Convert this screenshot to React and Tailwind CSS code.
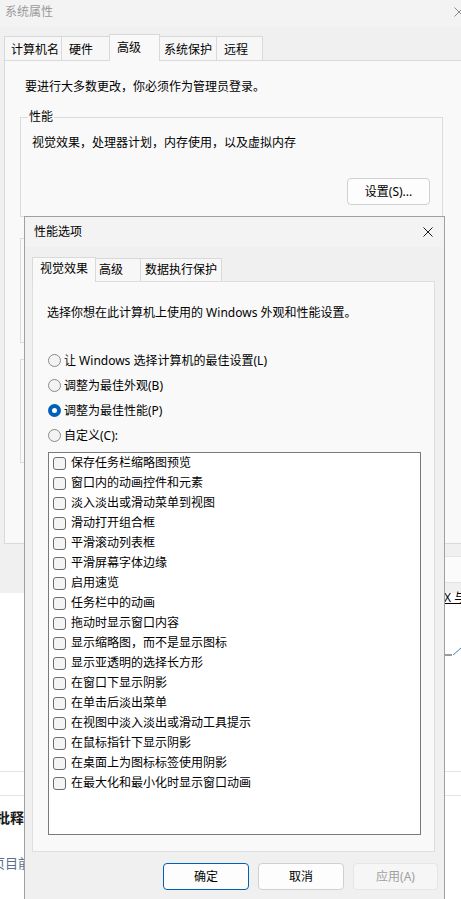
import React from "react";

const bgTabs = [
  { label: "计算机名", cls: "w-[58px] pl-[6px]" },
  { label: "硬件", cls: "w-[49px] pl-[7px] -ml-px" },
  { label: "高级", cls: "w-[51px] pl-[7px] -ml-px", active: true },
  { label: "系统保护", cls: "w-[58px] pl-[4px] -ml-px" },
  { label: "远程", cls: "w-[47px] pl-[7px] -ml-px" },
];

const perfTabs = [
  { label: "视觉效果", cls: "w-[64px] pl-[7px]", active: true },
  { label: "高级", cls: "w-[46px] pl-[3px] -ml-px" },
  { label: "数据执行保护", cls: "w-[82px] pl-[4px] -ml-px" },
];

const radios = [
  { label: "让 Windows 选择计算机的最佳设置(L)" },
  { label: "调整为最佳外观(B)" },
  { label: "调整为最佳性能(P)", checked: true },
  { label: "自定义(C):" },
];

const effects = [
  "保存任务栏缩略图预览",
  "窗口内的动画控件和元素",
  "淡入淡出或滑动菜单到视图",
  "滑动打开组合框",
  "平滑滚动列表框",
  "平滑屏幕字体边缘",
  "启用速览",
  "任务栏中的动画",
  "拖动时显示窗口内容",
  "显示缩略图，而不是显示图标",
  "显示亚透明的选择长方形",
  "在窗口下显示阴影",
  "在单击后淡出菜单",
  "在视图中淡入淡出或滑动工具提示",
  "在鼠标指针下显示阴影",
  "在桌面上为图标标签使用阴影",
  "在最大化和最小化时显示窗口动画",
];

function CloseIcon({ className }) {
  return (
    <svg width="10" height="10" viewBox="0 0 10 10" className={className}>
      <path d="M0.5 0.5L9.5 9.5M9.5 0.5L0.5 9.5" stroke="currentColor" strokeWidth="1" fill="none" />
    </svg>
  );
}

function Tab({ label, cls, active, tall }) {
  if (active) {
    return (
      <div
        className={`relative z-10 -mb-px shrink-0 border border-b-0 border-[#d9d9d9] bg-[#f9f9f9] ${tall} ${cls}`}
      >
        {label}
      </div>
    );
  }
  return (
    <div className={`shrink-0 border border-b-0 border-[#d9d9d9] bg-[#f7f7f7] ${cls}`}>
      {label}
    </div>
  );
}

function GroupBox({ title, className, children }) {
  return (
    <div className={`relative ml-[15px] w-[423px] border border-[#dcdcdc] ${className}`}>
      <span className="absolute left-[7px] top-[-9px] bg-[#f9f9f9] px-[1px] leading-[16px]">
        {title}
      </span>
      {children}
    </div>
  );
}

function Radio({ checked }) {
  if (checked) {
    return (
      <span className="flex h-[13px] w-[13px] shrink-0 items-center justify-center rounded-full bg-[#005fb8]">
        <span className="h-[5px] w-[5px] rounded-full bg-white" />
      </span>
    );
  }
  return <span className="h-[13px] w-[13px] shrink-0 rounded-full border border-[#8a8a8a] bg-[#f3f3f3]" />;
}

function Checkbox() {
  return <span className="h-[13px] w-[13px] shrink-0 rounded-[3px] border border-[#6b6b6b] bg-[#f4f4f4]" />;
}

export default function App() {
  return (
    <div className="relative h-[899px] w-[461px] overflow-hidden bg-white font-['Noto_Sans','Noto_Sans_CJK_SC',sans-serif] text-[12px] leading-[16px] text-black">
      {/* 系统属性 window behind */}
      <div className="flex h-[593px] flex-col bg-[#f0f0f0]">
        <div className="flex h-[27px] items-start bg-[#f3f3f3] pl-[5px] pt-[4px] text-[#9a9a9a]">
          <span>系统属性</span>
          <CloseIcon className="ml-auto mr-[-3px] mt-[3px] text-[#8a8a8a]" />
        </div>

        <div className="mt-[8px] flex h-[25px] items-end pl-[4px]">
          {bgTabs.map((t) => (
            <Tab
              key={t.label}
              label={t.label}
              active={t.active}
              tall="h-[27px] pt-[5px]"
              cls={`${t.cls} ${t.active ? "" : "h-[24px] pt-[5px]"}`}
            />
          ))}
        </div>

        <div className="ml-[4px] h-[484px] w-[470px] shrink-0 border border-[#dadada] bg-[#f9f9f9]">
          <div className="pl-[20px] pt-[18px]">要进行大多数更改，你必须作为管理员登录。</div>

          <GroupBox title="性能" className="mt-[22px] h-[100px]">
            <div className="pl-[11px] pt-[17px]">视觉效果，处理器计划，内存使用，以及虚拟内存</div>
            <div className="mt-[27px] flex justify-end pr-[12px]">
              <button className="flex h-[27px] w-[83px] items-center justify-center rounded-[4px] border border-[#d0d0d0] bg-[#fdfdfd]">
                设置(S)...
              </button>
            </div>
          </GroupBox>

          <GroupBox title="用户配置文件" className="mt-[21px] h-[105px]">
            <div className="pl-[11px] pt-[17px]">与登录帐户相关的桌面设置</div>
          </GroupBox>

          <GroupBox title="启动和故障恢复" className="mt-[16px] h-[104px]">
            <div className="pl-[11px] pt-[17px]">系统启动、系统故障和调试信息</div>
          </GroupBox>
        </div>

        <div className="mr-[-5px] mt-[12px] flex justify-end gap-[8px]">
          <button className="h-[27px] w-[86px] rounded-[4px] border border-[#d0d0d0] bg-[#fdfdfd]">确定</button>
          <button className="h-[27px] w-[86px] rounded-[4px] border border-[#d0d0d0] bg-[#fdfdfd]">取消</button>
          <button className="h-[27px] w-[86px] rounded-[4px] border border-[#e3e3e3] bg-[#fbfbfb] text-[#9a9a9a]">应用(A)</button>
        </div>
      </div>

      {/* page behind */}
      <div className="flex flex-col">
        <div className="mt-[-3px] pl-[444px] underline whitespace-nowrap">X 与</div>
        <div className="mt-[41px] pl-[444px]">
          <svg width="17" height="16" viewBox="0 0 17 16">
            <path d="M0 8H8" stroke="#7a7a7a" strokeWidth="1.5" />
            <path d="M9 8L17 1" stroke="#4a7fc0" strokeWidth="1" />
          </svg>
        </div>
        <div className="mt-[108px] border-t border-[#e3e3e3]" />
        <div className="mt-[23px] border-t border-[#e3e3e3]" />
        <div className="ml-[-4px] mt-[12px] whitespace-nowrap text-[14px] font-bold leading-[20px] text-[#1a1a1a]">
          批释数据
        </div>
        <div className="ml-[-8px] mt-[26px] whitespace-nowrap text-[13px] leading-[18px] text-[#5b6f90]">
          页目前
        </div>
      </div>

      {/* 性能选项 dialog */}
      <div className="absolute left-[24px] top-[216px] flex h-[700px] w-[421px] flex-col border border-[#a0a0a0] bg-[#f0f0f0]">
        <div className="flex h-[30px] shrink-0 items-center bg-[#f3f3f3] pl-[9px] pr-[11px]">
          <span>性能选项</span>
          <CloseIcon className="ml-auto text-[#1a1a1a]" />
        </div>

        <div className="flex flex-col pl-[7px] pr-[9px]">
          <div className="mt-[10px] flex h-[24px] items-end">
            {perfTabs.map((t) => (
              <Tab
                key={t.label}
                label={t.label}
                active={t.active}
                tall="h-[25px] pt-[3px]"
                cls={`${t.cls} ${t.active ? "" : "h-[23px] pt-[3px]"}`}
              />
            ))}
          </div>

          <div className="h-[571px] border border-[#dedede] bg-[#f9f9f9]">
            <div className="pl-[14px] pt-[23px] whitespace-nowrap">
              选择你想在此计算机上使用的 Windows 外观和性能设置。
            </div>

            <div className="mt-[27px] flex flex-col pl-[15px]">
              {radios.map((r) => (
                <div key={r.label} className="flex h-[25px] items-center gap-[3px] whitespace-nowrap">
                  <Radio checked={r.checked} />
                  <span>{r.label}</span>
                </div>
              ))}
            </div>

            <div className="ml-[15px] mt-[4px] h-[383px] w-[373px] border border-[#7a7a7a] bg-white pl-[4px]">
              {effects.map((e) => (
                <div key={e} className="flex h-[20px] items-center gap-[5px] whitespace-nowrap">
                  <Checkbox />
                  <span>{e}</span>
                </div>
              ))}
            </div>
          </div>

          <div className="mr-[-3px] mt-[11px] flex justify-end gap-[9px]">
            <button className="h-[27px] w-[86px] rounded-[4px] border border-[#005fb8] bg-[#fdfdfd]">确定</button>
            <button className="h-[27px] w-[86px] rounded-[4px] border border-[#d0d0d0] bg-[#fdfdfd]">取消</button>
            <button className="h-[27px] w-[85px] rounded-[4px] border border-[#e5e5e5] bg-[#f6f6f6] text-[#a0a0a0]">
              应用(A)
            </button>
          </div>
        </div>
      </div>
    </div>
  );
}
